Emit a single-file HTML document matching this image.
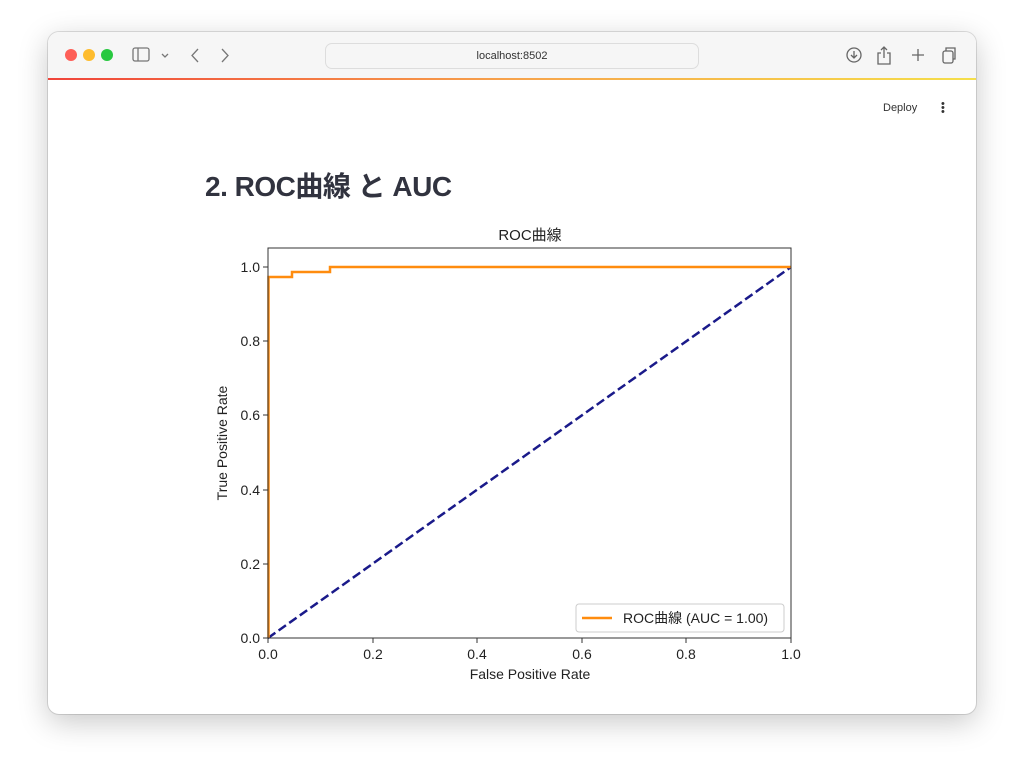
<!DOCTYPE html>
<html><head><meta charset="utf-8"><style>
body{margin:0;width:1024px;height:778px;background:#fff;position:relative;overflow:hidden;font-family:"Liberation Sans","Noto Sans CJK JP",sans-serif}
.win{position:absolute;left:48px;top:32px;width:928px;height:682px;border-radius:11px;background:#fff;box-shadow:0 8px 30px rgba(0,0,0,.22),0 0 0 1px rgba(0,0,0,.12);overflow:hidden}
.bar{position:absolute;left:0;top:0;width:928px;height:46px;background:#f6f6f6}
.grad{position:absolute;left:0;top:46px;width:928px;height:2px;background:linear-gradient(90deg,#f0443a,#f7a34b,#f5df4a)}
.dot{position:absolute;top:17px;width:12px;height:12px;border-radius:50%}
.url{position:absolute;left:277px;top:11px;width:372px;height:24px;border:1px solid #ddd;border-radius:7px;background:#f6f6f6;font-size:11px;color:#333;text-align:center;line-height:24px}
</style></head><body>
<div class="win">
<div class="bar">
<div class="dot" style="left:17px;background:#fe5f57"></div>
<div class="dot" style="left:35px;background:#febc2e"></div>
<div class="dot" style="left:53px;background:#28c840"></div>
<svg style="position:absolute;left:84px;top:14px" width="100" height="20" fill="none" stroke="#777" stroke-width="1.3">
<rect x="1" y="2" width="16" height="13" rx="2"/><line x1="6" y1="2" x2="6" y2="15"/>
<path d="M30 8l3 3 3-3"/><path d="M66 3l-6 6.5 6 6.5"/><path d="M90 3l6 6.5-6 6.5"/></svg>
<div class="url">localhost:8502</div>
<svg style="position:absolute;left:795px;top:13px" width="120" height="22" fill="none" stroke="#666" stroke-width="1.3">
<circle cx="11" cy="10" r="7"/><path d="M11 6v7M8 10l3 3 3-3"/>
<path d="M38 8h-3v11h12V8h-3M41 13V2M38 5l3-3 3 3"/>
<path d="M75 4v12M69 10h12"/>
<rect x="100" y="6" width="10" height="12" rx="2"/><path d="M103 6V3h9v11h-2"/></svg>
</div>
<div class="grad"></div>
<div style="position:absolute;left:835px;top:70px;font-size:11px;color:#333">Deploy</div>
<div style="position:absolute;left:893px;top:70px;width:3px;font-size:11px;line-height:4px;color:#333">•<br>•<br>•</div>
<div style="position:absolute;left:157px;top:133px;font-size:28px;font-weight:bold;color:#31333f;letter-spacing:-0.5px">2. ROC曲線 と AUC</div>
</div>
<svg style="position:absolute;left:0;top:0" width="1024" height="778" font-family="Liberation Sans, Noto Sans CJK JP, sans-serif" font-size="14" fill="#222">
<text x="530" y="240" text-anchor="middle" font-size="15">ROC曲線</text>
<line x1="268" y1="638" x2="791" y2="267" stroke="#1a1a8a" stroke-width="2.5" stroke-dasharray="9,4"/>
<path d="M268.5 638V277H292V272H330V267H791" fill="none" stroke="#ff8c0e" stroke-width="2.5"/>
<rect x="268" y="248" width="523" height="390" fill="none" stroke="#333" stroke-width="1"/>
<g stroke="#333"><line x1="263" y1="267" x2="268" y2="267"/><line x1="263" y1="341" x2="268" y2="341"/><line x1="263" y1="415" x2="268" y2="415"/><line x1="263" y1="490" x2="268" y2="490"/><line x1="263" y1="564" x2="268" y2="564"/><line x1="263" y1="638" x2="268" y2="638"/>
<line x1="268" y1="638" x2="268" y2="643"/><line x1="373" y1="638" x2="373" y2="643"/><line x1="477" y1="638" x2="477" y2="643"/><line x1="582" y1="638" x2="582" y2="643"/><line x1="686" y1="638" x2="686" y2="643"/><line x1="791" y1="638" x2="791" y2="643"/></g>
<g text-anchor="end"><text x="260" y="272">1.0</text><text x="260" y="346">0.8</text><text x="260" y="420">0.6</text><text x="260" y="495">0.4</text><text x="260" y="569">0.2</text><text x="260" y="643">0.0</text></g>
<g text-anchor="middle"><text x="268" y="659">0.0</text><text x="373" y="659">0.2</text><text x="477" y="659">0.4</text><text x="582" y="659">0.6</text><text x="686" y="659">0.8</text><text x="791" y="659">1.0</text>
<text x="530" y="679">False Positive Rate</text>
<text transform="translate(227 443) rotate(-90)">True Positive Rate</text></g>
<rect x="576" y="604" width="208" height="28" rx="3" fill="#fff" stroke="#ccc"/>
<line x1="582" y1="618" x2="612" y2="618" stroke="#ff8c0e" stroke-width="2.5"/>
<text x="623" y="623">ROC曲線 (AUC = 1.00)</text>
</svg>
</body></html>
